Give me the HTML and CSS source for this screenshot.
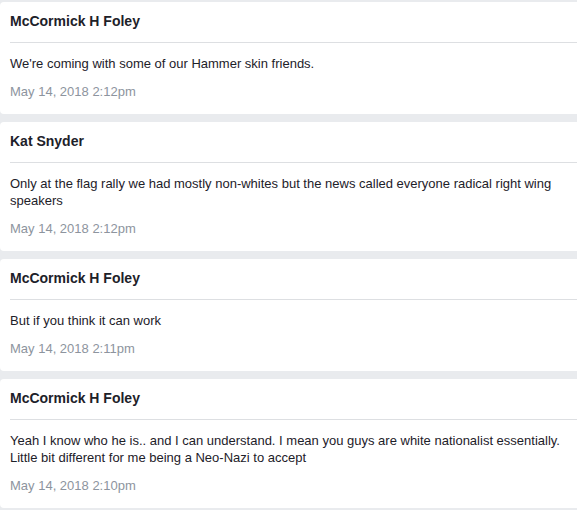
FILE: index.html
```html
<!DOCTYPE html>
<html>
<head>
<meta charset="utf-8">
<link rel="stylesheet" href="styles.css">
</head>
<body>
<div class="feed">
  <div class="card">
    <div class="name">McCormick H Foley</div>
    <div class="divider"></div>
    <div class="body">
      <div class="msg">We're coming with some of our Hammer skin friends.</div>
      <div class="time">May 14, 2018 2:12pm</div>
    </div>
  </div>
  <div class="card">
    <div class="name">Kat Snyder</div>
    <div class="divider"></div>
    <div class="body">
      <div class="msg">Only at the flag rally we had mostly non-whites but the news called everyone radical right wing speakers</div>
      <div class="time">May 14, 2018 2:12pm</div>
    </div>
  </div>
  <div class="card">
    <div class="name">McCormick H Foley</div>
    <div class="divider"></div>
    <div class="body">
      <div class="msg">But if you think it can work</div>
      <div class="time">May 14, 2018 2:11pm</div>
    </div>
  </div>
  <div class="card">
    <div class="name">McCormick H Foley</div>
    <div class="divider"></div>
    <div class="body">
      <div class="msg">Yeah I know who he is.. and I can understand. I mean you guys are white nationalist essentially. Little bit different for me being a Neo-Nazi to accept</div>
      <div class="time">May 14, 2018 2:10pm</div>
    </div>
  </div>
</div>
</body>
</html>
```

FILE: styles.css
```css
html, body {
  margin: 0;
  padding: 0;
  background: #e9ebee;
  overflow: hidden;
}
body {
  font-family: "Liberation Sans", Arial, Helvetica, sans-serif;
  color: #1d2129;
}
.feed {
  display: flex;
  flex-direction: column;
  gap: 8px;
  padding-top: 2px;
}
.card {
  background: #fff;
  border-radius: 4px 0 0 4px;
}
.name {
  font-size: 14px;
  font-weight: bold;
  line-height: 18px;
  padding: 10px 10px 12px 10px;
}
.divider {
  height: 1px;
  background: #dddfe2;
  margin-left: 10px;
}
.body {
  padding: 12px 10px 14px 10px;
}
.msg {
  font-size: 13px;
  line-height: 17px;
}
.time {
  font-size: 13px;
  line-height: 16px;
  color: #8d949e;
  margin-top: 12px;
}
```
